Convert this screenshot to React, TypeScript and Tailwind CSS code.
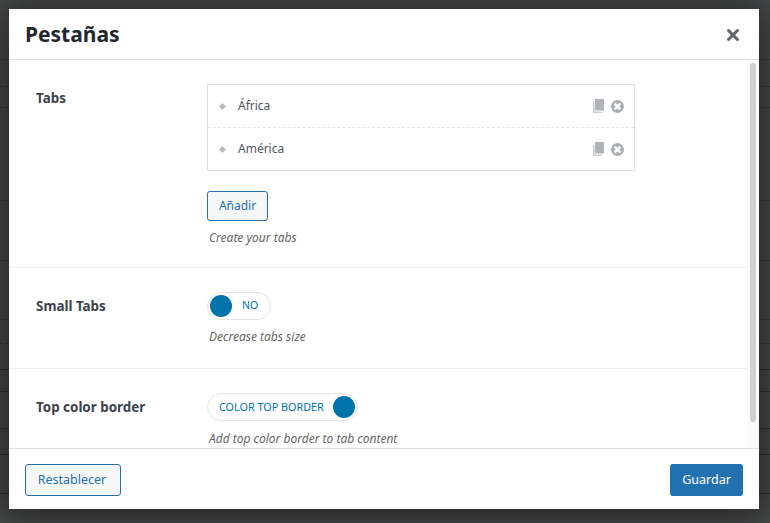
import { X } from "lucide-react";

const font = { fontFamily: '"Noto Sans", "Open Sans", sans-serif' };

function CopyIcon() {
  return (
    <svg width="11" height="14" viewBox="0 0 11 14">
      <path d="M0 3h1.5v9.5H9V14H0z" fill="#c9cccf" />
      <path d="M2 0H11V11.5H2z" fill="#b0b4b8" />
    </svg>
  );
}

function RemoveIcon() {
  return (
    <svg width="13" height="13" viewBox="0 0 13 13">
      <circle cx="6.5" cy="6.5" r="6.5" fill="#abafb3" />
      <path d="M3.6 3.6l5.8 5.8M9.4 3.6l-5.8 5.8" stroke="#fff" strokeWidth="2.6" />
    </svg>
  );
}

function TabRow({ name, dashed }: { name: string; dashed?: boolean }) {
  return (
    <div
      className={`flex items-center pr-[10px] pl-[11px] ${
        dashed ? "h-[43px] border-b border-dashed border-[#e2e4e6]" : "h-[42px]"
      }`}
    >
      <svg width="7" height="7" viewBox="0 0 7 7" className="shrink-0">
        <path d="M3.5 0L7 3.5 3.5 7 0 3.5z" fill="#b9bcbf" />
      </svg>
      <span className="ml-3 text-[12px] text-[#50575e]">{name}</span>
      <span className="ml-auto flex items-center gap-[7px]">
        <CopyIcon />
        <RemoveIcon />
      </span>
    </div>
  );
}

// list table rows showing through behind the overlay
function Backdrop() {
  return (
    <div className="absolute inset-0">
      <div className="h-[60px] border-b border-[#3a3b3c]" />
      <div className="h-[27px] border-b border-dashed border-[#333435]" />
      <div className="h-[21px] border-b border-dashed border-[#333435]" />
      <div className="h-[93px] border-b border-[#38393a]" />
      <div className="h-[60px] border-b border-[#38393a]" />
      <div className="h-[59px] border-b border-[#38393a]" />
      <div className="h-[24px] border-b border-dashed border-[#333435]" />
      <div className="h-[26px] border-b border-[#2c2d2e]" />
      <div className="h-[22px] border-b border-[#2c2d2e]" />
      <div className="h-[37px] border-b border-[#2c2d2e]" />
      <div className="h-[26px] border-b border-[#2c2d2e]" />
      <div className="h-[39px] border-b border-[#2c2d2e]" />
    </div>
  );
}

export default function App() {
  return (
    <div
      style={font}
      className="relative h-[523px] w-[770px] overflow-hidden bg-[#444546] pt-[9px] pl-[9px]"
    >
      <Backdrop />
      <div className="relative flex h-[500px] w-[750px] flex-col bg-white shadow-[0_3px_30px_rgba(0,0,0,0.6)]">
        <div className="flex h-[51px] shrink-0 items-center justify-between border-b border-[#dcdcde] pt-[2px] pr-[17px] pl-4">
          <h1 className="text-[21px] font-bold text-[#23282d]">Pestañas</h1>
          <X size={18} strokeWidth={4} className="text-[#5f666d]" />
        </div>

        <div className="flex min-h-0 flex-1">
          <div className="min-w-0 flex-1 overflow-hidden">
            <div className="flex h-[208px] border-b border-[#eeeeee] pt-6 pl-[27px]">
              <div className="w-[171px] pt-[5px] text-[13.4px] leading-[18px] font-bold text-[#3c434a]">Tabs</div>
              <div>
                <div className="w-[428px] border border-[#dcdcde]">
                  <TabRow name="África" dashed />
                  <TabRow name="América" />
                </div>
                <button className="mt-[20px] h-[30px] w-[61px] rounded-[3px] border border-[#2271b1] bg-[#f6f7f7] text-[12px] text-[#2271b1]">
                  Añadir
                </button>
                <p className="mt-[8px] pl-[2px] text-[12px] text-[#666] italic">Create your tabs</p>
              </div>
            </div>

            <div className="flex h-[101px] border-b border-[#eeeeee] pt-6 pl-[27px]">
              <div className="w-[171px] pt-[5px] text-[13.4px] leading-[18px] font-bold text-[#3c434a]">Small Tabs</div>
              <div>
                <div className="flex h-[28px] w-[64px] items-center rounded-full border border-[#e2e4e6] pl-[2px]">
                  <span className="h-[22px] w-[22px] rounded-full bg-[#0073aa]" />
                  <span className="ml-[10px] text-[10.5px] text-[#0073aa]">NO</span>
                </div>
                <p className="mt-[8px] pl-[2px] text-[12px] text-[#666] italic">Decrease tabs size</p>
              </div>
            </div>

            <div className="flex pt-6 pl-[27px]">
              <div className="w-[171px] pt-[5px] text-[13.4px] leading-[18px] font-bold text-[#3c434a]">Top color border</div>
              <div>
                <div className="flex h-[28px] w-[151px] items-center justify-between rounded-full border border-[#e2e4e6] pr-[2px] pl-[11px]">
                  <span className="text-[10.8px] text-[#0073aa]">COLOR TOP BORDER</span>
                  <span className="h-[22px] w-[22px] rounded-full bg-[#0073aa]" />
                </div>
                <p className="mt-[9px] pl-[2px] text-[12px] whitespace-nowrap text-[#666] italic">Add top color border to tab content</p>
              </div>
            </div>
          </div>

          <div className="w-[12px] shrink-0 bg-[#fbfbfb] pt-[3px] pl-[3px]">
            <div className="h-[359px] w-[6px] rounded-[3px] bg-[#d0d0d0]" />
          </div>
        </div>

        <div className="flex h-[61px] shrink-0 items-center justify-between border-t border-[#dcdcde] px-4 pt-[2px]">
          <button className="h-[32px] w-[96px] rounded-[3px] border border-[#2271b1] bg-[#f6f7f7] pr-[2px] text-[12.5px] text-[#2271b1]">
            Restablecer
          </button>
          <button className="h-[32px] w-[73px] rounded-[3px] bg-[#2271b1] text-[12.5px] text-white">
            Guardar
          </button>
        </div>
      </div>
    </div>
  );
}
